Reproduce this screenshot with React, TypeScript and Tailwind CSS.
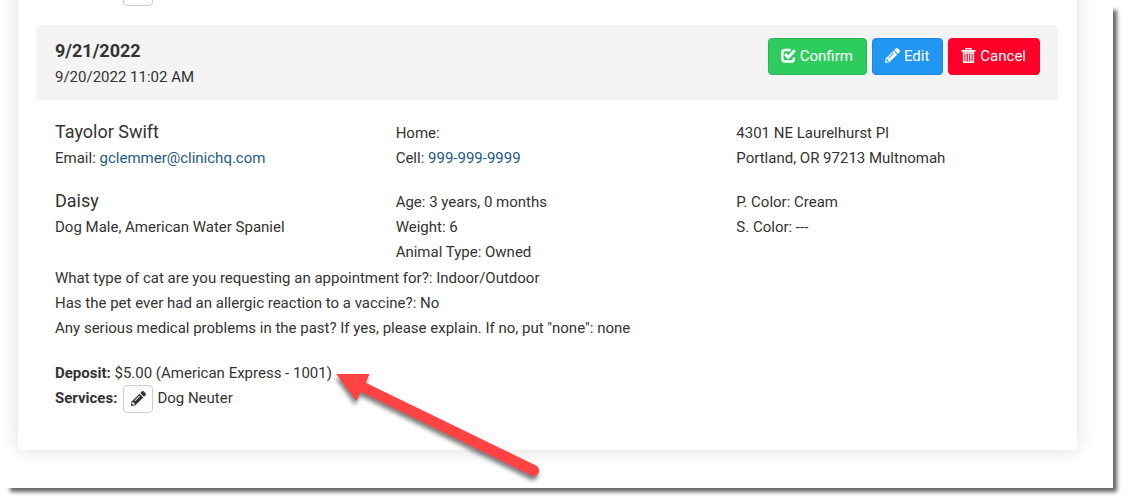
import { clsx } from "clsx";
import type { ReactNode } from "react";
import { FaPencilAlt } from "react-icons/fa";

type IconProps = { className?: string };

function CheckIcon({ className }: IconProps) {
  return (
    <svg viewBox="0 0 16 16" className={className} fill="none" stroke="currentColor" aria-hidden="true">
      <path d="M10.2 2.1H4.4A3 3 0 0 0 1.4 5.1v6.4a3 3 0 0 0 3 3h6.4a3 3 0 0 0 3-3V10" strokeWidth="2.7" />
      <path d="M4.3 6.4l3.5 3.7L14.7 2.4" strokeWidth="3" />
    </svg>
  );
}

function TrashIcon({ className }: IconProps) {
  return (
    <svg viewBox="0 0 16 16" className={className} fill="none" stroke="currentColor" aria-hidden="true">
      <path d="M5.4 2.5V.7h5.2v1.8" strokeWidth="1.4" />
      <path d="M.6 3.1h14.8" strokeWidth="2" />
      <path d="M2.8 5v10.2h10.4V5" strokeWidth="1.5" />
      <path d="M2 5.3h12M5.4 5v10M8 5v10M10.6 5v10" strokeWidth="1.3" />
    </svg>
  );
}

function ActionButton({ className, children }: { className: string; children: ReactNode }) {
  return (
    <button
      type="button"
      className={clsx("flex h-[37px] items-center gap-1 rounded border pr-[13px] pl-3 text-[15px] text-white", className)}
    >
      {children}
    </button>
  );
}

function EditServicesButton() {
  return (
    <button
      type="button"
      aria-label="Edit services"
      className="flex h-7 w-[30px] items-center justify-center rounded border border-[#ccc] bg-white pb-0.5 text-[#333]"
    >
      <FaPencilAlt className="size-[15px]" />
    </button>
  );
}

function DepositArrow() {
  return (
    <svg
      viewBox="332 361 220 130"
      className="pointer-events-none absolute top-0 left-full h-[130px] w-[220px] overflow-visible drop-shadow-[-1px_4px_2px_rgba(0,0,0,0.5)]"
      aria-hidden="true"
    >
      <path
        d="M336.3 374H369.5L365.8 382.7L536 465.6A5.5 5.5 0 0 1 531.2 475.6L360.7 391.8L356.3 401Z"
        fill="#ff4343"
      />
    </svg>
  );
}

const questions = [
  { q: "What type of cat are you requesting an appointment for?", a: "Indoor/Outdoor" },
  { q: "Has the pet ever had an allergic reaction to a vaccine?", a: "No" },
  { q: 'Any serious medical problems in the past? If yes, please explain. If no, put "none"', a: "none" },
];

export default function App() {
  return (
    <div className="bg-white pr-[15px] pb-[15px] font-['Roboto','Liberation_Sans',sans-serif] text-[15px] leading-[25px] text-[#333]">
      <main className="flex flex-col bg-white pr-9 pb-[38px] pl-[18px] shadow-[7px_7px_4px_-3px_rgba(0,0,0,0.6)]">
        <div className="-mt-6 rounded-b bg-white pt-0.5 pr-[19px] pb-[37px] pl-[18px] shadow-[0_0_20px_rgba(0,0,0,0.14)]">
          <div className="mb-[19px] pl-[87px]">
            <EditServicesButton />
          </div>

          <section>
            <header className="flex items-start justify-between rounded-t bg-[#f4f4f4] pt-[13px] pr-[18px] pb-2.5 pl-[19px]">
              <div>
                <h2 className="text-lg leading-[26px] font-bold">9/21/2022</h2>
                <p className="mt-px">9/20/2022 11:02 AM</p>
              </div>
              <div className="flex gap-[5px]">
                <ActionButton className="border-[#29b553] bg-[#2ecc5e]">
                  <CheckIcon className="mb-[3px] size-[15px]" />
                  Confirm
                </ActionButton>
                <ActionButton className="border-[#1a87e0] bg-[#2196f3]">
                  <FaPencilAlt className="mb-[3px] size-[15px]" />
                  Edit
                </ActionButton>
                <ActionButton className="border-[#ff0029] bg-[#ff0029]">
                  <TrashIcon className="mb-[3px] size-[15px]" />
                  Cancel
                </ActionButton>
              </div>
            </header>

            <div className="mt-[21px] grid grid-cols-3 *:px-[19px]">
              <div>
                <h3 className="mb-1 text-lg leading-[21px]">Tayolor Swift</h3>
                <p>
                  Email: <a href="mailto:gclemmer@clinichq.com" className="text-[#235a81]">gclemmer@clinichq.com</a>
                </p>
              </div>
              <div>
                <p>Home:</p>
                <p>
                  Cell: <a href="tel:999-999-9999" className="text-[#235a81]">999-999-9999</a>
                </p>
              </div>
              <address className="not-italic">
                <p>4301 NE Laurelhurst Pl</p>
                <p>Portland, OR 97213 Multnomah</p>
              </address>
            </div>

            <div className="mt-[19px] grid grid-cols-3 *:px-[19px]">
              <div>
                <h3 className="mb-1 text-lg leading-[21px]">Daisy</h3>
                <p>Dog Male, American Water Spaniel</p>
              </div>
              <div>
                <p>Age: 3 years, 0 months</p>
                <p>Weight: 6</p>
                <p>Animal Type: Owned</p>
              </div>
              <div>
                <p>P. Color: Cream</p>
                <p>S. Color: ---</p>
              </div>
            </div>

            <div className="mt-px px-[19px]">
              {questions.map(({ q, a }) => (
                <p key={q}>{`${q}: ${a}`}</p>
              ))}
            </div>

            <div className="mt-5 px-[19px]">
              <p className="relative w-fit leading-6">
                <strong>Deposit:</strong> $5.00 (American Express - 1001)
                <DepositArrow />
              </p>
              <div className="flex items-start leading-[27px]">
                <strong className="mr-1.5">Services:</strong>
                <EditServicesButton />
                <span className="ml-1">Dog Neuter</span>
              </div>
            </div>
          </section>
        </div>
      </main>
    </div>
  );
}
